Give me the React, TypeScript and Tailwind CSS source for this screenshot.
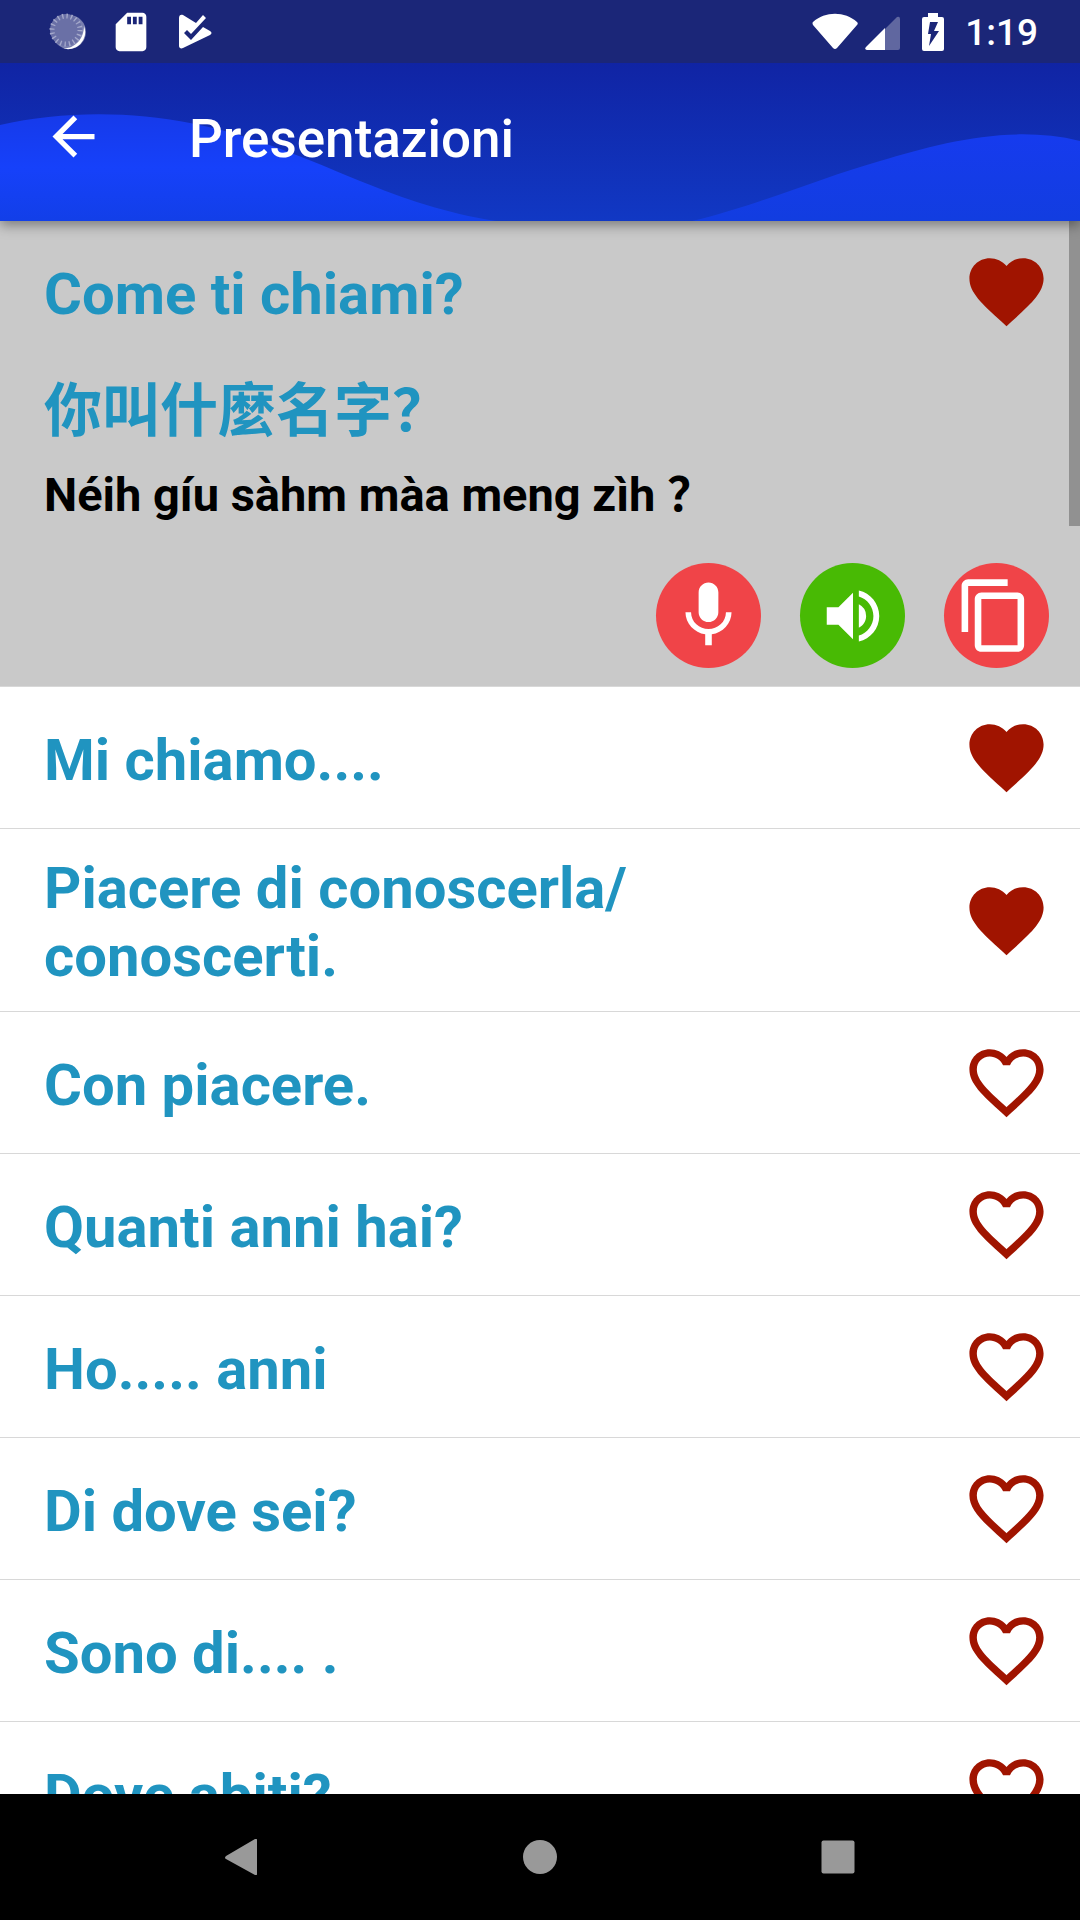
import { useState } from "react";
import {
  MdArrowBack,
  MdContentCopy,
  MdFavorite,
  MdFavoriteBorder,
  MdMic,
  MdSdCard,
  MdVolumeUp,
} from "react-icons/md";

interface IPhrase {
  id: number;
  text: string;
  favorite: boolean;
  translation?: string;
  romanization?: string;
}

const initialPhrases: IPhrase[] = [
  {
    id: 1,
    text: "Come ti chiami?",
    favorite: true,
    translation: "你叫什麼名字？",
    romanization: "Néih gíu sàhm màa meng zìh ？",
  },
  { id: 2, text: "Mi chiamo....", favorite: true },
  { id: 3, text: "Piacere di conoscerla/ conoscerti.", favorite: true },
  { id: 4, text: "Con piacere.", favorite: false },
  { id: 5, text: "Quanti anni hai?", favorite: false },
  { id: 6, text: "Ho..... anni", favorite: false },
  { id: 7, text: "Di dove sei?", favorite: false },
  { id: 8, text: "Sono di.... .", favorite: false },
  { id: 9, text: "Dove abiti?", favorite: false },
];

function StatusBar() {
  return (
    <div className="relative z-20 flex h-[63px] shrink-0 items-center justify-between bg-[#1b2678] pr-[42px] pl-12 text-white">
      <div className="flex items-center">
        <svg className="h-10 w-10" viewBox="0 0 40 40">
          <circle cx="21" cy="20" r="17" fill="#7a80b0" />
          <path d="M36 14a17 17 0 0 1-22 22c10 2 22-7 22-22z" fill="#fff" />
          <circle cx="18" cy="18" r="16" fill="#6a70a6" />
          <circle
            cx="18"
            cy="18"
            r="14"
            fill="none"
            stroke="#a4a8ca"
            strokeWidth="5"
            strokeDasharray="1.4 3"
          />
        </svg>
        <MdSdCard className="ml-5 h-[46px] w-[46px]" />
        <svg className="ml-6 h-9 w-9" viewBox="0 0 36 36">
          <path
            d="M1 4c0-3 2-4 4-3l13 8 7-8 3 3-15 16-4-4-3 3 7 7 12-13 7 4c2 1 2 3 0 4L5 34c-2 1-4 0-4-2z"
            fill="#fff"
          />
        </svg>
      </div>
      <div className="flex items-center">
        <svg className="h-10 w-[46px]" viewBox="0 0 46 40">
          <path d="M1 10C13-1 33-1 45 10c1 1 1 2 0 3L25 36q-2 2-4 0L1 13q-1-2 0-3z" fill="#fff" />
        </svg>
        <svg className="ml-1.5 h-10 w-9" viewBox="0 0 36 40">
          <path d="M2 36 33 5q3-1 3 2v29q0 2-2 2H3q-3-1-1-2z" fill="#6067a0" />
          <path d="M2 35 21 16v22H3q-3-1-1-3z" fill="#fff" />
        </svg>
        <svg className="ml-[22px] h-10 w-[22px]" viewBox="0 0 22 40">
          <path d="M6 1h10v4h4q2 0 2 2v30q0 2-2 2H2q-2 0-2-2V7q0-2 2-2h4z" fill="#fff" />
          <path d="M8 10h8l-4 9h5L7 34l2-12H6z" fill="#1b2678" />
        </svg>
        <span className="ml-[21px] pt-0.5 text-[37px] leading-[42px] font-medium">1:19</span>
      </div>
    </div>
  );
}

function Header({ title }: { title: string }) {
  return (
    <header className="relative z-10 h-[158px] shrink-0 bg-linear-to-b from-[#1024a4] to-[#1138c4] shadow-[0_4px_12px_rgba(0,0,0,0.4)]">
      <svg
        className="absolute inset-0 h-full w-full"
        viewBox="0 0 1080 158"
        preserveAspectRatio="none"
      >
        <defs>
          <linearGradient id="wave" x1="0" y1="0" x2="0" y2="1">
            <stop offset="0" stopColor="#163aea" />
            <stop offset="0.5" stopColor="#1641fa" />
            <stop offset="1" stopColor="#123fe8" />
          </linearGradient>
          <linearGradient id="waveRight" x1="0" y1="0" x2="0" y2="1">
            <stop offset="0" stopColor="#163bee" />
            <stop offset="1" stopColor="#123de0" />
          </linearGradient>
        </defs>
        <path
          d="M0 62C60 48 130 48 190 60C250 71 310 97 360 118C405 136 445 150 496 158H0z"
          fill="url(#wave)"
        />
        <path
          d="M692 158C750 145 820 115 880 98C940 80 1010 61 1080 78V158z"
          fill="url(#waveRight)"
        />
      </svg>
      <div className="relative flex h-[147px] items-center pl-[42px] text-white">
        <button type="button" aria-label="Indietro">
          <MdArrowBack className="h-[63px] w-[63px]" />
        </button>
        <h1 className="ml-[84px] pt-1 text-[53px] leading-[62px] font-medium">{title}</h1>
      </div>
    </header>
  );
}

type PhraseRowProps = {
  phrase: IPhrase;
  toggleFavorite: (id: number) => void;
};

function PhraseRow({ phrase, toggleFavorite }: PhraseRowProps) {
  return (
    <li
      className={
        phrase.translation
          ? "border-b border-[#d8d8d8] bg-[#c9c9c9]"
          : "border-b border-[#d8d8d8] bg-white"
      }
    >
      <div className="flex min-h-[141px] items-center justify-between gap-16 py-[21px] pr-[29px] pl-11">
        <p className="pt-1 text-[58px] leading-[68px] font-bold text-[#2094c0]">
          {phrase.text}
        </p>
        <button
          type="button"
          aria-label="Preferito"
          aria-pressed={phrase.favorite}
          className="shrink-0 text-[#a01400]"
          onClick={() => toggleFavorite(phrase.id)}
        >
          {phrase.favorite ? (
            <MdFavorite className="h-[89px] w-[89px]" />
          ) : (
            <MdFavoriteBorder className="h-[89px] w-[89px]" />
          )}
        </button>
      </div>
      {phrase.translation && (
        <div className="pt-2.5 pr-[31px] pb-[18px] pl-11">
          <p
            lang="zh"
            className="font-['Noto_Sans_CJK_SC',sans-serif] text-[58px] leading-[68px] font-bold text-[#2094c0]"
          >
            {phrase.translation}
          </p>
          <p className="mt-[27px] text-[47px] leading-14 font-bold text-black">
            {phrase.romanization}
          </p>
          <div className="mt-10 flex justify-end gap-[39px] text-white">
            <button
              type="button"
              aria-label="Registra"
              className="flex h-[105px] w-[105px] items-center justify-center rounded-full bg-[#f04448]"
            >
              <MdMic className="h-[79px] w-[79px]" />
            </button>
            <button
              type="button"
              aria-label="Ascolta"
              className="flex h-[105px] w-[105px] items-center justify-center rounded-full bg-[#48ba04]"
            >
              <MdVolumeUp className="h-[70px] w-[70px]" />
            </button>
            <button
              type="button"
              aria-label="Copia"
              className="flex h-[105px] w-[105px] items-center justify-center rounded-full bg-[#f04448] pr-1"
            >
              <MdContentCopy className="h-[79px] w-[79px]" />
            </button>
          </div>
        </div>
      )}
    </li>
  );
}

function NavigationBar() {
  return (
    <nav className="flex h-[126px] shrink-0 items-center bg-black px-[93px] text-[#999999]">
      <button type="button" aria-label="Back" className="flex flex-1 justify-center">
        <svg className="h-9 w-9" viewBox="0 0 36 36" fill="currentColor">
          <path d="M2 17 31 0q2-1 2 1v34q0 2-2 1L2 20q-2-1 0-3z" />
        </svg>
      </button>
      <button type="button" aria-label="Home" className="flex flex-1 justify-center">
        <svg className="h-9 w-9" viewBox="0 0 36 36" fill="currentColor">
          <circle cx="18" cy="18" r="17" />
        </svg>
      </button>
      <button type="button" aria-label="Recents" className="flex flex-1 justify-center">
        <svg className="h-9 w-9" viewBox="0 0 36 36" fill="currentColor">
          <rect x="1.5" y="1.5" width="33" height="33" rx="2" />
        </svg>
      </button>
    </nav>
  );
}

export default function App() {
  const [phrases, setPhrases] = useState(initialPhrases);

  const toggleFavorite = (id: number) => {
    setPhrases((prev) =>
      prev.map((p) => (p.id === id ? { ...p, favorite: !p.favorite } : p))
    );
  };

  return (
    <div className="flex h-screen flex-col bg-white font-[Roboto,'Noto_Sans_CJK_SC',sans-serif]">
      <StatusBar />
      <Header title="Presentazioni" />
      <main className="relative min-h-0 flex-1 overflow-hidden">
        <ul>
          {phrases.map((phrase) => (
            <PhraseRow key={phrase.id} phrase={phrase} toggleFavorite={toggleFavorite} />
          ))}
        </ul>
        <div className="absolute top-0 right-0 h-[305px] w-[11px] bg-[#919191]" />
      </main>
      <NavigationBar />
    </div>
  );
}
